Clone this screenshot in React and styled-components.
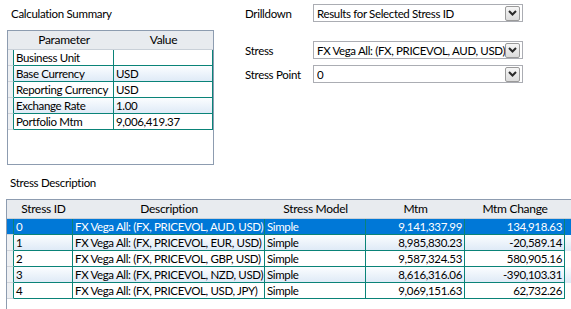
import React from "react";
import styled, { createGlobalStyle } from "styled-components";

const Global = createGlobalStyle`
  html, body { margin: 0; padding: 0; background: #fff; }
  body {
    font-family: "Lato", "Liberation Sans", sans-serif;
    font-size: 11.5px;
    letter-spacing: -0.3px;
    color: #000;
  }
`;

const Page = styled.div`
  width: 571px;
  height: 309px;
  overflow: hidden;
`;

const Top = styled.div`
  display: flex;
  height: 174px;
`;

const LeftPanel = styled.div`
  width: 230px;
  padding: 5px 0 0 7px;
  box-sizing: border-box;
`;

const Title = styled.div`
  padding-left: 4px;
  height: 25px;
  line-height: 17px;
`;

const Box = styled.div`
  width: 207px;
  height: 135px;
  border: 1px solid #8d9cb0;
  box-sizing: border-box;
  overflow: hidden;
`;

const Row = styled.div`
  display: grid;
  grid-template-columns: ${({ cols }) => cols};
  height: ${({ h }) => h}px;
  line-height: ${({ h }) => h - 1}px;
  background: ${({ alt, selected }) =>
    selected ? "#0078d7" : alt ? "linear-gradient(#fbfdff, #dde9f6)" : "#fff"};
  color: ${({ selected }) => (selected ? "#fff" : "#000")};
`;

const HeaderRow = styled(Row)`
  background: #e8ebef;
  font-size: 12px;
`;

const HeadCell = styled.div`
  text-align: center;
  white-space: nowrap;
  overflow: hidden;
  border-bottom: 1px solid #c9d0d8;
`;

const Cell = styled.div`
  white-space: nowrap;
  overflow: hidden;
  padding: 0 2px 0 2px;
  letter-spacing: -0.35px;
  text-align: ${({ right }) => (right ? "right" : "left")};
  border-right: 1px solid #0a8378;
  border-bottom: 1px solid #0a8378;
`;

const RowHead = styled.div`
  border-right: 1px solid #0a8378;
  border-bottom: 1px solid #d0d4da;
  background: ${({ selected }) => (selected ? "#0078d7" : "#eef0f3")};
`;

const RightPanel = styled.div`
  padding: 4px 0 0 15px;
  display: flex;
  flex-direction: column;
`;

const Field = styled.div`
  display: flex;
  align-items: center;
  height: 18px;
  margin-bottom: ${({ gap }) => gap}px;
`;

const Label = styled.div`
  width: 68px;
`;

const Combo = styled.div`
  width: 210px;
  height: 18px;
  box-sizing: border-box;
  border: 1px solid #abadb3;
  display: flex;
  align-items: center;
  padding-left: 3px;
  white-space: nowrap;
`;

const ComboText = styled.div`
  flex: 1;
  overflow: hidden;
  letter-spacing: -0.35px;
`;

const DropBtn = styled.div`
  width: 13px;
  height: 13px;
  margin-right: 2px;
  border: 1px solid #9a9a9a;
  border-radius: 2px;
  background: linear-gradient(#f6f6f6, #dcdcdc);
  display: flex;
  align-items: center;
  justify-content: center;
  flex-shrink: 0;
`;

const Bottom = styled.div`
  padding-left: 6px;
`;

const StressGrid = styled.div`
  width: 570px;
  border: 1px solid #8d9cb0;
  border-right: none;
  border-bottom: none;
  box-sizing: border-box;
  height: 110px;
`;

const Chevron = () => (
  <DropBtn>
    <svg width="9" height="6" viewBox="0 0 9 6">
      <path d="M1 1 L4.5 4.5 L8 1" stroke="#2a2a2a" strokeWidth="2" fill="none" />
    </svg>
  </DropBtn>
);

const params = [
  ["Business Unit", ""],
  ["Base Currency", "USD"],
  ["Reporting Currency", "USD"],
  ["Exchange Rate", "1.00"],
  ["Portfolio Mtm", "9,006,419.37"],
];

const stresses = [
  ["0", "FX Vega All: (FX, PRICEVOL, AUD, USD)", "Simple", "9,141,337.99", "134,918.63"],
  ["1", "FX Vega All: (FX, PRICEVOL, EUR, USD)", "Simple", "8,985,830.23", "-20,589.14"],
  ["2", "FX Vega All: (FX, PRICEVOL, GBP, USD)", "Simple", "9,587,324.53", "580,905.16"],
  ["3", "FX Vega All: (FX, PRICEVOL, NZD, USD)", "Simple", "8,616,316.06", "-390,103.31"],
  ["4", "FX Vega All: (FX, PRICEVOL, USD, JPY)", "Simple", "9,069,151.63", "62,732.26"],
];

const sumCols = "6px 100px 99px";
const stressCols = "7px 59px 192px 101px 99px 100px 20px";

export default function App() {
  return (
    <Page>
      <Global />
      <Top>
        <LeftPanel>
          <Title>Calculation Summary</Title>
          <Box>
            <HeaderRow cols={sumCols} h={19}>
              <HeadCell />
              <HeadCell>Parameter</HeadCell>
              <HeadCell>Value</HeadCell>
            </HeaderRow>
            {params.map(([p, v], i) => (
              <Row key={p} cols={sumCols} h={16} alt={i % 2 === 1}>
                <RowHead />
                <Cell>{p}</Cell>
                <Cell>{v}</Cell>
              </Row>
            ))}
          </Box>
        </LeftPanel>
        <RightPanel>
          <Field gap={19}>
            <Label>Drilldown</Label>
            <Combo>
              <ComboText>Results for Selected Stress ID</ComboText>
              <Chevron />
            </Combo>
          </Field>
          <Field gap={6}>
            <Label>Stress</Label>
            <Combo>
              <ComboText>FX Vega All: (FX, PRICEVOL, AUD, USD)</ComboText>
              <Chevron />
            </Combo>
          </Field>
          <Field gap={0}>
            <Label>Stress Point</Label>
            <Combo>
              <ComboText>0</ComboText>
              <Chevron />
            </Combo>
          </Field>
        </RightPanel>
      </Top>
      <Bottom>
        <Title>Stress Description</Title>
        <StressGrid>
          <HeaderRow cols={stressCols} h={19}>
            <HeadCell />
            <HeadCell>Stress ID</HeadCell>
            <HeadCell>Description</HeadCell>
            <HeadCell>Stress Model</HeadCell>
            <HeadCell>Mtm</HeadCell>
            <HeadCell>Mtm Change</HeadCell>
            <HeadCell />
          </HeaderRow>
          {stresses.map(([id, d, m, mtm, ch], i) => (
            <Row key={id} cols={stressCols} h={16} alt={i % 2 === 1} selected={i === 0}>
              <RowHead selected={i === 0} />
              <Cell>{id}</Cell>
              <Cell>{d}</Cell>
              <Cell>{m}</Cell>
              <Cell right>{mtm}</Cell>
              <Cell right>{ch}</Cell>
              <div />
            </Row>
          ))}
        </StressGrid>
      </Bottom>
    </Page>
  );
}
